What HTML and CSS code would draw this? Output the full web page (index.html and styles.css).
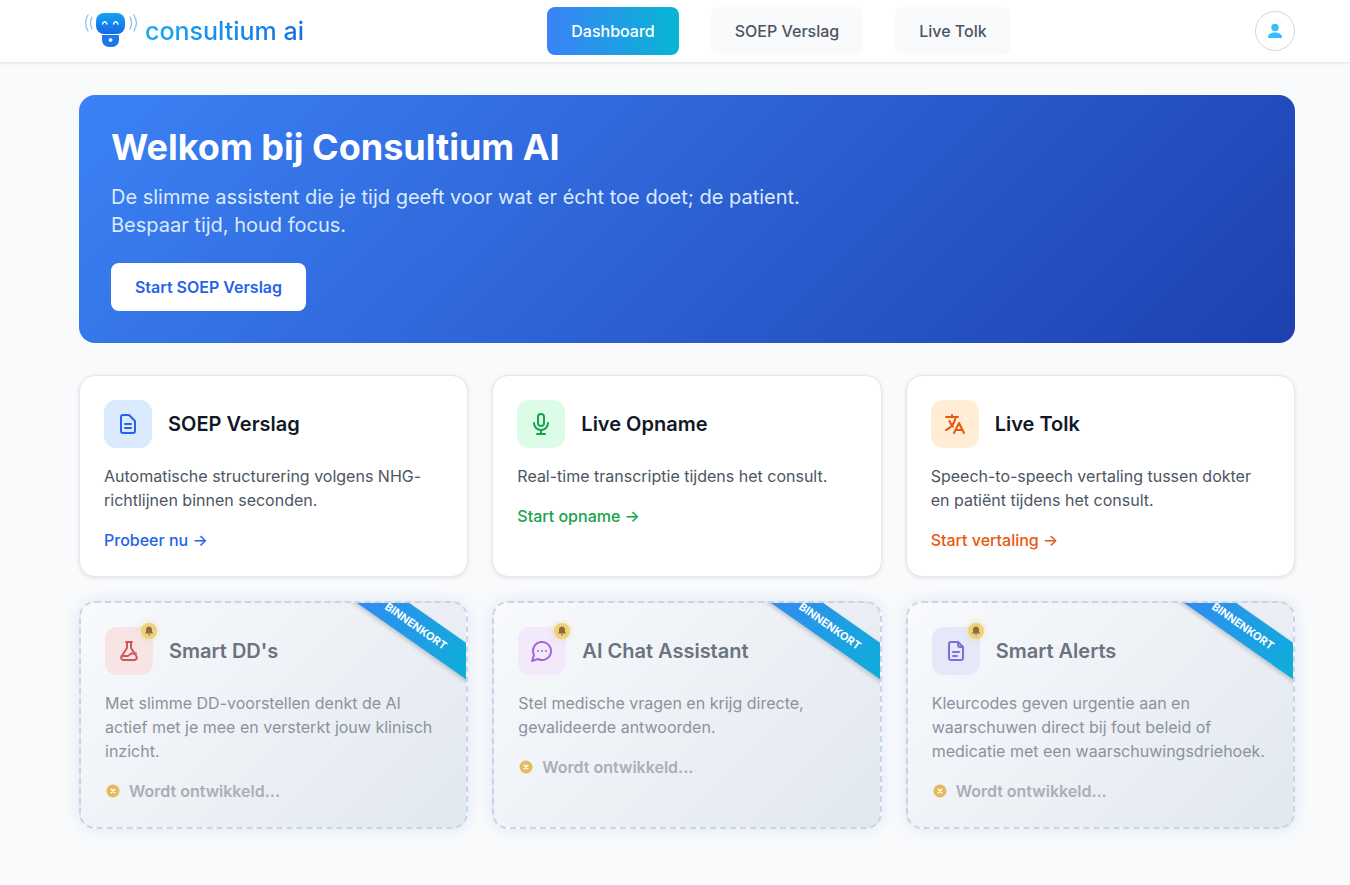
FILE: index.html
```html
<!DOCTYPE html>
<html lang="nl">
<head>
<meta charset="UTF-8">
<meta name="viewport" content="width=device-width, initial-scale=1.0">
<title>Consultium AI</title>
<link rel="stylesheet" href="styles.css">
</head>
<body>

<header class="topbar">
  <a class="logo" href="#">
    <svg class="logo-mark" width="56" height="36" viewBox="0 0 56 36" fill="none">
      <defs>
        <linearGradient id="logoGrad" x1="0" y1="0" x2="0" y2="1">
          <stop offset="0" stop-color="#12a5f5"/>
          <stop offset="1" stop-color="#1668e3"/>
        </linearGradient>
      </defs>
      <g stroke="#7cc0f5" stroke-width="1.2" stroke-linecap="round">
        <path d="M5 3c-3 5-3 11 0 16"/>
        <path d="M9 5c-2 4-2 8 0 12"/>
        <path d="M51 3c3 5 3 11 0 16"/>
        <path d="M47 5c2 4 2 8 0 12"/>
      </g>
      <rect x="13" y="1" width="29" height="21" rx="8" fill="url(#logoGrad)"/>
      <path d="M19 23h17v5a7 7 0 0 1-7 7h-3a7 7 0 0 1-7-7z" fill="#1a78ea"/>
      <circle cx="27.500" cy="28" r="2" fill="#dcefff"/>
      <g stroke="#fff" stroke-width="1.4" stroke-linecap="round">
        <path d="M19.500 12c.8-3 3.700-3 4.500 0"/>
        <path d="M30.500 12c.8-3 3.700-3 4.500 0"/>
      </g>
    </svg>
    <span class="logo-text">consultium ai</span>
  </a>

  <nav class="nav">
    <a class="nav-btn active" href="#">Dashboard</a>
    <a class="nav-btn" href="#">SOEP Verslag</a>
    <a class="nav-btn" href="#">Live Tolk</a>
  </nav>

  <button class="avatar" type="button" aria-label="Profiel">
    <svg width="16" height="16" viewBox="0 0 16 16" fill="#38bdf8">
      <circle cx="8" cy="4.500" r="3.700"/>
      <path d="M1 14.200c0-3 3-4.700 7-4.700s7 1.700 7 4.700c0 .6-.4.9-1 .9H2c-.6 0-1-.3-1-.9z"/>
    </svg>
  </button>
</header>

<main class="page">
  <section class="hero">
    <h1>Welkom bij Consultium AI</h1>
    <p>De slimme assistent die je tijd geeft voor wat er écht toe doet; de patient.<br>Bespaar tijd, houd focus.</p>
    <a class="hero-btn" href="#">Start SOEP Verslag</a>
  </section>

  <section class="grid">
    <article class="card">
      <div class="card-head">
        <div class="icon-box blue">
          <svg width="24" height="24" viewBox="0 0 24 24" fill="none" stroke="currentColor" stroke-width="2" stroke-linecap="round" stroke-linejoin="round">
            <path d="M9 12h6m-6 4h6m2 5H7a2 2 0 0 1-2-2V5a2 2 0 0 1 2-2h5.586a1 1 0 0 1 .707.293l5.414 5.414a1 1 0 0 1 .293.707V19a2 2 0 0 1-2 2z"/>
          </svg>
        </div>
        <h2>SOEP Verslag</h2>
      </div>
      <p>Automatische structurering volgens NHG-richtlijnen binnen seconden.</p>
      <a class="card-link blue-text" href="#">Probeer nu →</a>
    </article>

    <article class="card">
      <div class="card-head">
        <div class="icon-box green">
          <svg width="24" height="24" viewBox="0 0 24 24" fill="none" stroke="currentColor" stroke-width="2" stroke-linecap="round" stroke-linejoin="round">
            <rect x="9" y="2" width="6" height="12" rx="3"/>
            <path d="M5 11a7 7 0 0 0 14 0"/>
            <path d="M12 18v4"/>
            <path d="M8 22h8"/>
          </svg>
        </div>
        <h2>Live Opname</h2>
      </div>
      <p>Real-time transcriptie tijdens het consult.</p>
      <a class="card-link green-text" href="#">Start opname →</a>
    </article>

    <article class="card">
      <div class="card-head">
        <div class="icon-box orange">
          <svg width="24" height="24" viewBox="0 0 24 24" fill="none" stroke="currentColor" stroke-width="2" stroke-linecap="round" stroke-linejoin="round">
            <path d="M3 5h12M9 3v2m1.048 9.500A18.022 18.022 0 0 1 6.412 9m6.088 9h7M11 21l5-10 5 10M12.751 5C11.783 10.770 8.070 15.610 3 18.129"/>
          </svg>
        </div>
        <h2>Live Tolk</h2>
      </div>
      <p>Speech-to-speech vertaling tussen dokter en patiënt tijdens het consult.</p>
      <a class="card-link orange-text" href="#">Start vertaling →</a>
    </article>

    <article class="card soon">
      <div class="ribbon">BINNENKORT</div>
      <div class="card-head">
        <div class="icon-box red">
          <svg width="24" height="24" viewBox="0 0 24 24" fill="none" stroke="currentColor" stroke-width="2" stroke-linecap="round" stroke-linejoin="round">
            <path d="M9 3h6"/>
            <path d="M10 3v6l-5.500 8.500A2.300 2.300 0 0 0 6.500 21h11a2.300 2.300 0 0 0 2-3.500L14 9V3"/>
            <path d="M4.500 17h6c2 0 2.500-2.500 4-2.500h4.500"/>
          </svg>
          <span class="bell">
            <svg width="10" height="10" viewBox="0 0 10 10" fill="#8a6d3b"><path d="M5 .6c-1.900 0-3 1.400-3 3.200v2L1 7.600h8L8 5.800v-2C8 2 6.900.6 5 .6zM3.900 8.300a1.100 1.100 0 0 0 2.200 0z"/></svg>
          </span>
        </div>
        <h2>Smart DD's</h2>
      </div>
      <p>Met slimme DD-voorstellen denkt de AI actief met je mee en versterkt jouw klinisch inzicht.</p>
      <div class="status">
        <svg width="16" height="16" viewBox="0 0 16 16"><circle cx="8" cy="8" r="6.500" fill="#e3bb5e"/><path d="M6.300 6.300l3.400 3.400m0-3.400l-3.400 3.400" stroke="#fff" stroke-width="1.600" stroke-linecap="round"/></svg>
        Wordt ontwikkeld...
      </div>
    </article>

    <article class="card soon">
      <div class="ribbon">BINNENKORT</div>
      <div class="card-head">
        <div class="icon-box purple">
          <svg width="24" height="24" viewBox="0 0 24 24" fill="none" stroke="currentColor" stroke-width="2" stroke-linecap="round" stroke-linejoin="round">
            <path d="M7.900 20A9 9 0 1 0 4 16.100L2 22z"/>
            <path d="M8 12h.01M12 12h.01M16 12h.01"/>
          </svg>
          <span class="bell">
            <svg width="10" height="10" viewBox="0 0 10 10" fill="#8a6d3b"><path d="M5 .6c-1.900 0-3 1.400-3 3.200v2L1 7.600h8L8 5.800v-2C8 2 6.900.6 5 .6zM3.900 8.300a1.100 1.100 0 0 0 2.200 0z"/></svg>
          </span>
        </div>
        <h2>AI Chat Assistant</h2>
      </div>
      <p>Stel medische vragen en krijg directe, gevalideerde antwoorden.</p>
      <div class="status">
        <svg width="16" height="16" viewBox="0 0 16 16"><circle cx="8" cy="8" r="6.500" fill="#e3bb5e"/><path d="M6.300 6.300l3.400 3.400m0-3.400l-3.400 3.400" stroke="#fff" stroke-width="1.600" stroke-linecap="round"/></svg>
        Wordt ontwikkeld...
      </div>
    </article>

    <article class="card soon">
      <div class="ribbon">BINNENKORT</div>
      <div class="card-head">
        <div class="icon-box indigo">
          <svg width="24" height="24" viewBox="0 0 24 24" fill="none" stroke="currentColor" stroke-width="2" stroke-linecap="round" stroke-linejoin="round">
            <path d="M14 3H7a2 2 0 0 0-2 2v14a2 2 0 0 0 2 2h10a2 2 0 0 0 2-2V8z"/>
            <path d="M14 3v3a2 2 0 0 0 2 2h3"/>
            <path d="M9 13h6M9 17h4"/>
          </svg>
          <span class="bell">
            <svg width="10" height="10" viewBox="0 0 10 10" fill="#8a6d3b"><path d="M5 .6c-1.900 0-3 1.400-3 3.200v2L1 7.600h8L8 5.800v-2C8 2 6.900.6 5 .6zM3.900 8.300a1.100 1.100 0 0 0 2.200 0z"/></svg>
          </span>
        </div>
        <h2>Smart Alerts</h2>
      </div>
      <p>Kleurcodes geven urgentie aan en waarschuwen direct bij fout beleid of medicatie met een waarschuwingsdriehoek.</p>
      <div class="status">
        <svg width="16" height="16" viewBox="0 0 16 16"><circle cx="8" cy="8" r="6.500" fill="#e3bb5e"/><path d="M6.300 6.300l3.400 3.400m0-3.400l-3.400 3.400" stroke="#fff" stroke-width="1.600" stroke-linecap="round"/></svg>
        Wordt ontwikkeld...
      </div>
    </article>
  </section>
</main>

</body>
</html>
```

FILE: styles.css
```css
* {
  box-sizing: border-box;
}
body {
  margin: 0;
  min-height: 885px;
  background-color: #f9fafb;
  color: #111827;
  font-family: Inter, "Liberation Sans", sans-serif;
  font-size: 16px;
}
a {
  text-decoration: none;
}

/* header */
.topbar {
  height: 62px;
  padding: 0 55px 0 79px;
  display: flex;
  align-items: center;
  justify-content: space-between;
  background-color: #fff;
  box-shadow: 0 1px 3px rgba(0, 0, 0, 0.1);
}
.logo {
  width: 224px;
  display: flex;
  align-items: center;
  gap: 6px;
  padding-left: 4px;
}
.logo-mark {
  flex-shrink: 0;
  margin-top: -2px;
}
.logo-text {
  font-family: Inter, sans-serif;
  font-size: 25px;
  font-weight: 500;
  white-space: nowrap;
  background: linear-gradient(90deg, #19a9f3, #1670e4);
  -webkit-background-clip: text;
  background-clip: text;
  color: transparent;
}
.nav {
  display: flex;
  gap: 32px;
}
.nav-btn {
  height: 48px;
  padding: 0 24px;
  display: flex;
  align-items: center;
  border-radius: 8px;
  background-color: #f9fafb;
  color: #4b5563;
  font-weight: 500;
}
.nav-btn.active {
  background: linear-gradient(90deg, #3b82f6, #06b6d4);
  color: #fff;
}
.avatar {
  width: 40px;
  height: 40px;
  padding: 0;
  display: flex;
  align-items: center;
  justify-content: center;
  border: 1px solid #d1d5db;
  border-radius: 50%;
  background-color: #fff;
}

/* main */
.page {
  padding: 33px 55px 0 79px;
}
.hero {
  height: 248px;
  padding: 32px;
  border-radius: 16px;
  background: linear-gradient(135deg, #3b82f6, #1e40af);
  color: #fff;
}
.hero h1 {
  margin: 0 0 16px;
  font-size: 36px;
  line-height: 40px;
  font-weight: 700;
}
.hero p {
  margin: 0 0 24px;
  font-size: 20px;
  line-height: 28px;
  color: #dbeafe;
}
.hero-btn {
  width: 195px;
  height: 48px;
  display: flex;
  align-items: center;
  justify-content: center;
  border-radius: 8px;
  background-color: #fff;
  color: #2563eb;
  font-weight: 600;
}

.grid {
  margin-top: 32px;
  display: grid;
  grid-template-columns: repeat(3, 1fr);
  gap: 24px;
}
.card {
  position: relative;
  padding: 24px;
  border: 1px solid #e5e7eb;
  border-radius: 16px;
  background-color: #fff;
  box-shadow: 0 1px 4px rgba(0, 0, 0, 0.1);
}
.card-head {
  display: flex;
  align-items: center;
  gap: 16px;
  margin-bottom: 16px;
}
.card h2 {
  margin: 0;
  font-size: 20px;
  line-height: 28px;
  font-weight: 600;
}
.card p {
  margin: 0 0 16px;
  line-height: 24px;
  color: #4b5563;
}
.card-link {
  display: block;
  line-height: 24px;
  font-weight: 500;
}

.icon-box {
  position: relative;
  width: 48px;
  height: 48px;
  flex-shrink: 0;
  display: flex;
  align-items: center;
  justify-content: center;
  border-radius: 12px;
}
.blue { background-color: #dbeafe; color: #2563eb; }
.green { background-color: #dcfce7; color: #16a34a; }
.orange { background-color: #ffedd5; color: #ea580c; }
.red { background-color: #f8e4e4; color: #cd5a5a; }
.purple { background-color: #f2e9fa; color: #a566d8; }
.indigo { background-color: #e5e8f8; color: #7a70d6; }
.blue-text { color: #2563eb; }
.green-text { color: #16a34a; }
.orange-text { color: #ea580c; }

/* coming soon cards */
.card.soon {
  overflow: hidden;
  border: 2px dashed #cbd5e1;
  background: linear-gradient(135deg, #f8fafc, #e2e8f0);
  box-shadow: 0 0 16px rgba(59, 130, 246, 0.14);
}
.soon h2 {
  color: #6b7280;
}
.soon p {
  color: #8b929e;
}
.status {
  display: flex;
  align-items: center;
  gap: 8px;
  line-height: 24px;
  font-weight: 600;
  color: #a9aeb8;
}
.bell {
  position: absolute;
  top: -4px;
  right: -4px;
  width: 16px;
  height: 16px;
  display: flex;
  align-items: center;
  justify-content: center;
  border-radius: 50%;
  background-color: #ecd27c;
  box-shadow: 0 0 6px rgba(236, 210, 124, 0.6);
}
.ribbon {
  position: absolute;
  top: 8px;
  right: -50px;
  width: 200px;
  height: 30px;
  display: flex;
  align-items: center;
  justify-content: center;
  transform: rotate(35deg);
  background: linear-gradient(90deg, #3b82f6, #06b6d4);
  box-shadow: 0 2px 4px rgba(0, 0, 0, 0.2);
  color: #fff;
  font-size: 11px;
  font-weight: 700;
}
```
